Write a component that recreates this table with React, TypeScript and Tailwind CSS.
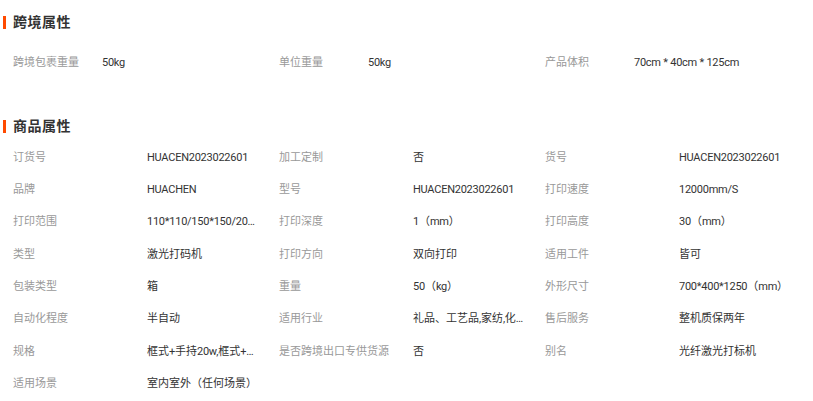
import React from "react";

type Attr = { label: string; value: string };

const crossBorder: Attr[] = [
  { label: "跨境包裹重量", value: "50kg" },
  { label: "单位重量", value: "50kg" },
  { label: "产品体积", value: "70cm * 40cm * 125cm" },
];

const productAttrs: Attr[] = [
  { label: "订货号", value: "HUACEN2023022601" },
  { label: "加工定制", value: "否" },
  { label: "货号", value: "HUACEN2023022601" },
  { label: "品牌", value: "HUACHEN" },
  { label: "型号", value: "HUACEN2023022601" },
  { label: "打印速度", value: "12000mm/S" },
  { label: "打印范围", value: "110*110/150*150/200*200/300*300" },
  { label: "打印深度", value: "1（mm）" },
  { label: "打印高度", value: "30（mm）" },
  { label: "类型", value: "激光打码机" },
  { label: "打印方向", value: "双向打印" },
  { label: "适用工件", value: "皆可" },
  { label: "包装类型", value: "箱" },
  { label: "重量", value: "50（kg）" },
  { label: "外形尺寸", value: "700*400*1250（mm）" },
  { label: "自动化程度", value: "半自动" },
  { label: "适用行业", value: "礼品、工艺品,家纺,化妆品,五金" },
  { label: "售后服务", value: "整机质保两年" },
  { label: "规格", value: "框式+手持20w,框式+手持30w" },
  { label: "是否跨境出口专供货源", value: "否" },
  { label: "别名", value: "光纤激光打标机" },
  { label: "适用场景", value: "室内室外（任何场景）" },
];

// latin runs are set a touch tighter, like the original page font
const Mixed = ({ text }: { text: string }) => {
  const parts = text.match(/[\x20-\x7e]+|[^\x20-\x7e]+/g) || [];
  return (
    <>
      {parts.map((p, i) =>
        /^[\x20-\x7e]+$/.test(p) ? (
          <span key={i} className="tracking-[-0.25px] whitespace-pre">
            {p}
          </span>
        ) : (
          <span key={i}>{p}</span>
        )
      )}
    </>
  );
};

const Heading = ({ title }: { title: string }) => (
  <div className="flex h-[20px] items-center">
    <span className="h-[13px] w-[3px] bg-[#ff4a00]" />
    <span className="ml-[7px] text-[14px] font-bold tracking-[0.5px] text-[#333]">{title}</span>
  </div>
);

export default function App() {
  return (
    <div
      className="min-h-[401px] w-[813px] bg-white pl-[3px] pt-[12px] text-[11px]"
      style={{ fontFamily: 'Roboto, "Noto Sans CJK SC", sans-serif' }}
    >
      <Heading title="跨境属性" />
      <div className="mt-[15px] grid grid-cols-[266px_266px_266px] pl-[10px]">
        {crossBorder.map((a) => (
          <div key={a.label} className="flex h-[32px] items-center">
            <span className="w-[89px] shrink-0 text-[#999]">{a.label}</span>
            <span className="text-[#333]">
              <Mixed text={a.value} />
            </span>
          </div>
        ))}
      </div>

      <div className="mt-[37px]">
        <Heading title="商品属性" />
      </div>
      <div className="mt-[6px] grid grid-cols-[266px_266px_266px] pl-[10px]">
        {productAttrs.map((a) => (
          <div key={a.label} className="flex h-[32.3px] items-center">
            <span className="w-[134px] shrink-0 text-[#999]">{a.label}</span>
            <span className="w-[112px] truncate text-[#333]">
              <Mixed text={a.value} />
            </span>
          </div>
        ))}
      </div>
    </div>
  );
}
